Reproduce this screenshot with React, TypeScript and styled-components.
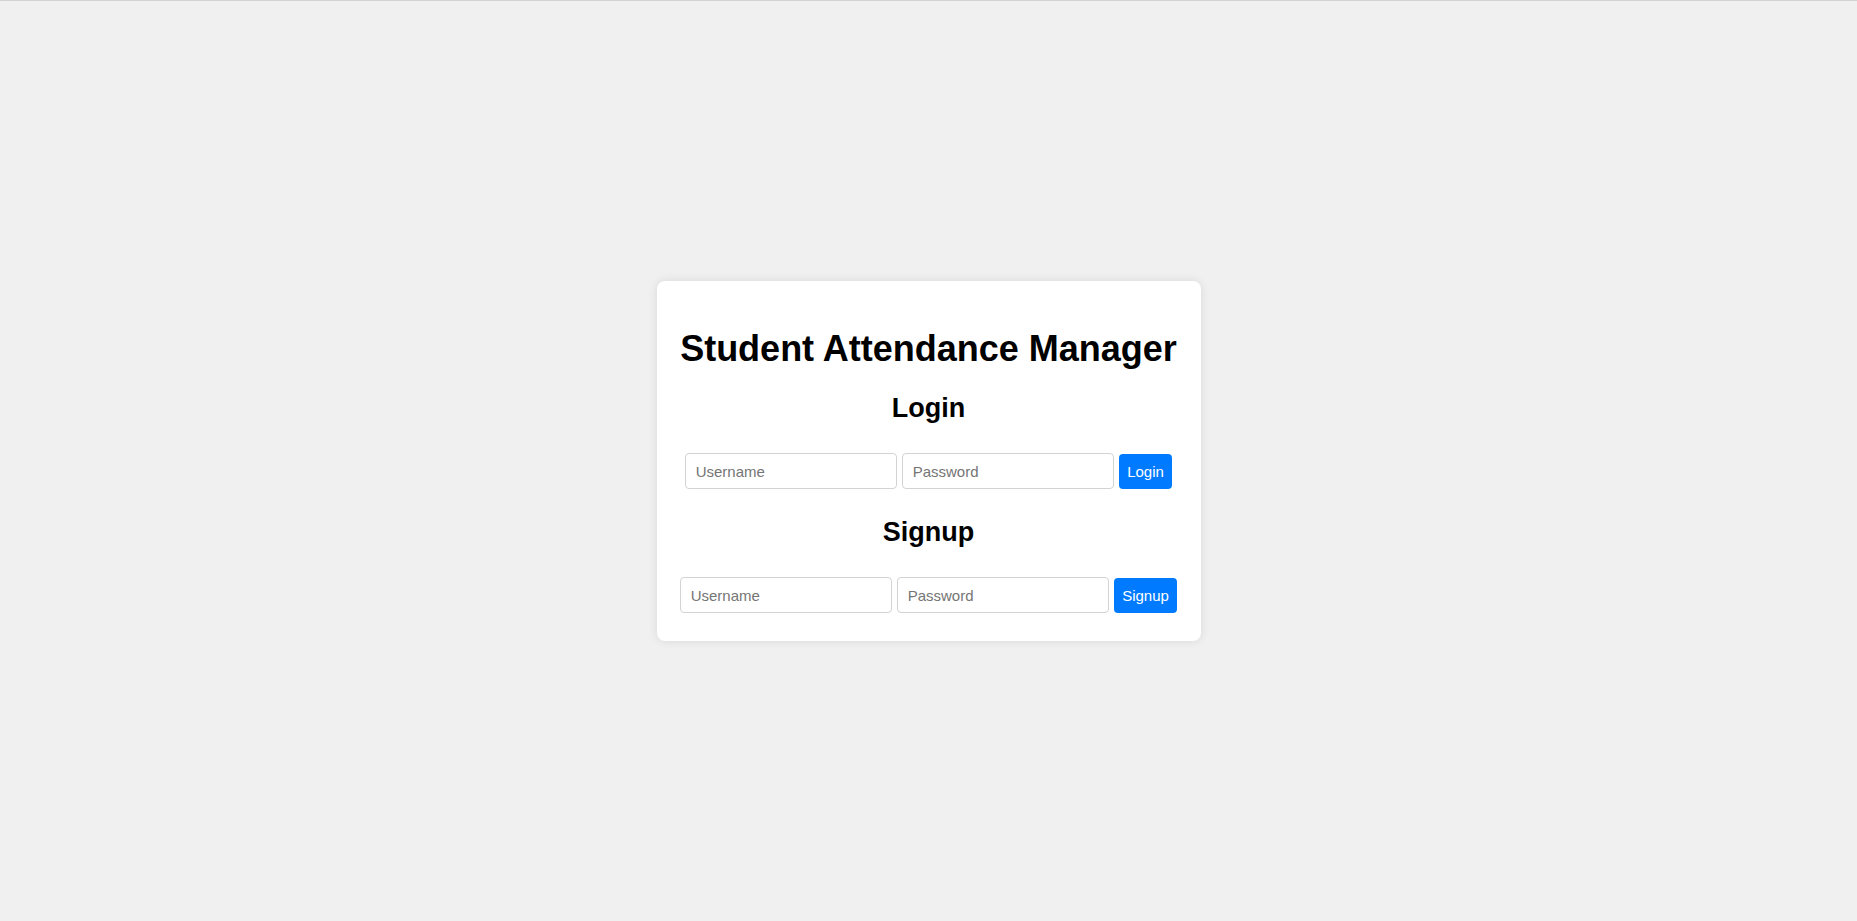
import React from "react";
import styled, { createGlobalStyle } from "styled-components";

const GlobalStyle = createGlobalStyle`
  html, body {
    margin: 0;
    padding: 0;
  }
  body {
    font-family: "Liberation Sans", Arial, sans-serif;
    background: #f0f0f0;
  }
  * {
    box-sizing: border-box;
  }
`;

const Page = styled.div`
  min-height: 100vh;
  display: flex;
  align-items: center;
  justify-content: center;
  background: #f0f0f0;
  border-top: 1px solid #d2d2d2;
`;

const Card = styled.div`
  width: 544px;
  background: #ffffff;
  border-radius: 8px;
  box-shadow: 0 0 10px rgba(0, 0, 0, 0.1);
  padding: 20px 20px 28px;
  display: flex;
  flex-direction: column;
  align-items: center;
  text-align: center;
`;

const Title = styled.h1`
  margin: 27px 0 0;
  font-size: 36px;
  line-height: 41px;
  font-weight: 700;
  color: #000;
  white-space: nowrap;
`;

const SectionTitle = styled.h2<{ $top: number }>`
  margin: ${(p) => p.$top}px 0 0;
  font-size: 27px;
  line-height: 31px;
  font-weight: 700;
  color: #000;
`;

const Row = styled.form`
  margin-top: 29px;
  display: flex;
  align-items: center;
  justify-content: center;
  gap: 5px;
`;

const Field = styled.input`
  width: 212px;
  height: 36px;
  padding: 0 10px;
  border: 1px solid #d3d3d3;
  border-radius: 4px;
  font-family: "Liberation Sans", Arial, sans-serif;
  font-size: 15px;
  color: #000;
  background: #fff;
  outline: none;
  &::placeholder {
    color: #757575;
  }
`;

const Button = styled.button`
  height: 35px;
  padding: 0 8.5px;
  border: none;
  border-radius: 4px;
  background: #007bff;
  color: #fff;
  font-family: "Liberation Sans", Arial, sans-serif;
  font-size: 15px;
  cursor: pointer;
`;

export default function App() {
  return (
    <>
      <GlobalStyle />
      <Page>
        <Card>
          <Title>Student Attendance Manager</Title>
          <SectionTitle $top={24}>Login</SectionTitle>
          <Row onSubmit={(e) => e.preventDefault()}>
            <Field type="text" placeholder="Username" />
            <Field type="password" placeholder="Password" />
            <Button type="submit">Login</Button>
          </Row>
          <SectionTitle $top={28}>Signup</SectionTitle>
          <Row onSubmit={(e) => e.preventDefault()}>
            <Field type="text" placeholder="Username" />
            <Field type="password" placeholder="Password" />
            <Button type="submit">Signup</Button>
          </Row>
        </Card>
      </Page>
    </>
  );
}
